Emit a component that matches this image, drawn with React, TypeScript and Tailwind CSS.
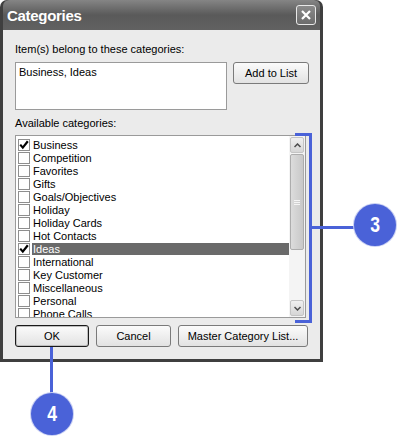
import React from 'react';

const categories = [
  { name: 'Business', checked: true },
  { name: 'Competition' },
  { name: 'Favorites' },
  { name: 'Gifts' },
  { name: 'Goals/Objectives' },
  { name: 'Holiday' },
  { name: 'Holiday Cards' },
  { name: 'Hot Contacts' },
  { name: 'Ideas', checked: true, selected: true },
  { name: 'International' },
  { name: 'Key Customer' },
  { name: 'Miscellaneous' },
  { name: 'Personal' },
  { name: 'Phone Calls' },
];

const Check = () => (
  <svg width="10" height="10" viewBox="0 0 10 10">
    <path d="M1.2 4.6 L3.8 7.6 L8.8 1.2" stroke="#000" strokeWidth="2.2" fill="none" />
  </svg>
);

const XpButton = ({ label, width, isDefault }: { label: string; width: string; isDefault?: boolean }) => (
  <button
    className={`${width} h-[22px] rounded-[3px] border bg-gradient-to-b from-[#fbfbfb] to-[#e2e2e2] text-[11px] text-black flex items-center justify-center ${
      isDefault ? 'border-[#1a1a1a] shadow-[inset_0_0_0_1px_#bdbdbd]' : 'border-[#7a7a7a]'
    }`}
  >
    {label}
  </button>
);

const Callout = ({ n }: { n: string }) => (
  <div className="w-[42px] h-[42px] rounded-full bg-[#4a62d8] flex items-center justify-center shadow-[0_0_0_1px_#c9d0f3]">
    <span className="text-white font-bold text-[22px] leading-none scale-x-[0.8]">{n}</span>
  </div>
);

const App = () => {
  return (
    <div className="relative w-[398px] h-[437px] bg-white overflow-hidden font-['Liberation_Sans',Arial,sans-serif]">
      {/* dialog */}
      <div className="w-[323px] h-[362px] flex flex-col rounded-t-[7px] bg-[#3f3f3f] px-[3px] pb-[3px]">
        <div className="h-[30px] flex items-center justify-between pl-[4px] pr-[4px] rounded-t-[6px] bg-gradient-to-b from-[#858585] via-[#5a5a5a] to-[#616161]">
          <span className="text-white font-bold text-[15px] pt-[2px] tracking-[-0.3px]">Categories</span>
          <div className="w-[20px] h-[20px] rounded-[3px] border border-[#e8e8e8] bg-gradient-to-b from-[#8a8a8a] to-[#6c6c6c] flex items-center justify-center">
            <svg width="12" height="12" viewBox="0 0 12 12">
              <path d="M2 2 L10 10 M10 2 L2 10" stroke="#fff" strokeWidth="2.2" />
            </svg>
          </div>
        </div>

        <div className="flex-1 bg-[#ebebeb] pl-[12px] pt-[13px] text-[11px] text-black">
          <div className="h-[13px] leading-[13px]">Item(s) belong to these categories:</div>
          <div className="flex mt-[6px]">
            <div className="w-[212px] h-[48px] border border-[#9a9a9a] bg-white px-[3px] pt-[3px] leading-[13px]">
              Business, Ideas
            </div>
            <div className="ml-[6px]">
              <XpButton label="Add to List" width="w-[76px]" />
            </div>
          </div>

          <div className="h-[13px] leading-[13px] mt-[7px]">Available categories:</div>
          <div className="mt-[5px] w-[291px] h-[183px] border border-[#9a9a9a] bg-white flex overflow-hidden">
            <div className="flex-1 pt-[2px] pl-[2px]">
              {categories.map((c) => (
                <div key={c.name} className="h-[13px] flex items-center">
                  <div className="w-[12px] h-[12px] border border-[#8e8e8e] bg-white flex items-center justify-center">
                    {c.checked && <Check />}
                  </div>
                  <div
                    className={`ml-[2px] flex-1 h-[12px] leading-[12px] pl-[1px] ${
                      c.selected ? 'bg-[#6a6a6a] text-white' : ''
                    }`}
                  >
                    {c.name}
                  </div>
                </div>
              ))}
            </div>
            <div className="w-[16px] flex flex-col bg-[#f4f4f4] pt-[1px] pb-[1px]">
              <div className="h-[16px] mx-[1px] rounded-[2px] border border-[#c4c4c4] bg-gradient-to-b from-[#f0f0f0] to-[#d6d6d6] flex items-center justify-center">
                <svg width="7" height="5" viewBox="0 0 7 5">
                  <path d="M0.5 4 L3.5 1 L6.5 4" stroke="#4d4d4d" strokeWidth="1.5" fill="none" />
                </svg>
              </div>
              <div className="flex-1">
                <div className="h-[96px] mt-[1px] mx-[1px] rounded-[2px] border border-[#adadad] bg-gradient-to-r from-[#dcdcdc] to-[#c8c8c8] flex flex-col items-center justify-center gap-[1px]">
                  <div className="w-[6px] h-[1px] bg-[#f5f5f5]" />
                  <div className="w-[6px] h-[1px] bg-[#f5f5f5]" />
                  <div className="w-[6px] h-[1px] bg-[#f5f5f5]" />
                </div>
              </div>
              <div className="h-[16px] mx-[1px] rounded-[2px] border border-[#c4c4c4] bg-gradient-to-b from-[#f0f0f0] to-[#d6d6d6] flex items-center justify-center">
                <svg width="7" height="5" viewBox="0 0 7 5">
                  <path d="M0.5 1 L3.5 4 L6.5 1" stroke="#4d4d4d" strokeWidth="1.5" fill="none" />
                </svg>
              </div>
            </div>
          </div>

          <div className="flex mt-[7px]">
            <XpButton label="OK" width="w-[74px]" isDefault />
            <div className="ml-[7px]">
              <XpButton label="Cancel" width="w-[75px]" />
            </div>
            <div className="ml-[7px]">
              <XpButton label="Master Category List..." width="w-[130px]" />
            </div>
          </div>
        </div>
      </div>

      {/* callout 3 */}
      <div className="absolute left-[295px] top-[133px] w-[17px] h-[190px] border-[3px] border-l-0 border-[#4a62d8]" />
      <div className="absolute left-[312px] top-[226px] w-[44px] h-[3px] bg-[#4a62d8]" />
      <div className="absolute left-[354px] top-[204px]">
        <Callout n="3" />
      </div>

      {/* callout 4 */}
      <div className="absolute left-[50px] top-[347px] w-[3px] h-[50px] bg-[#4a62d8]" />
      <div className="absolute left-[31px] top-[393px]">
        <Callout n="4" />
      </div>
    </div>
  );
};

export default App;
